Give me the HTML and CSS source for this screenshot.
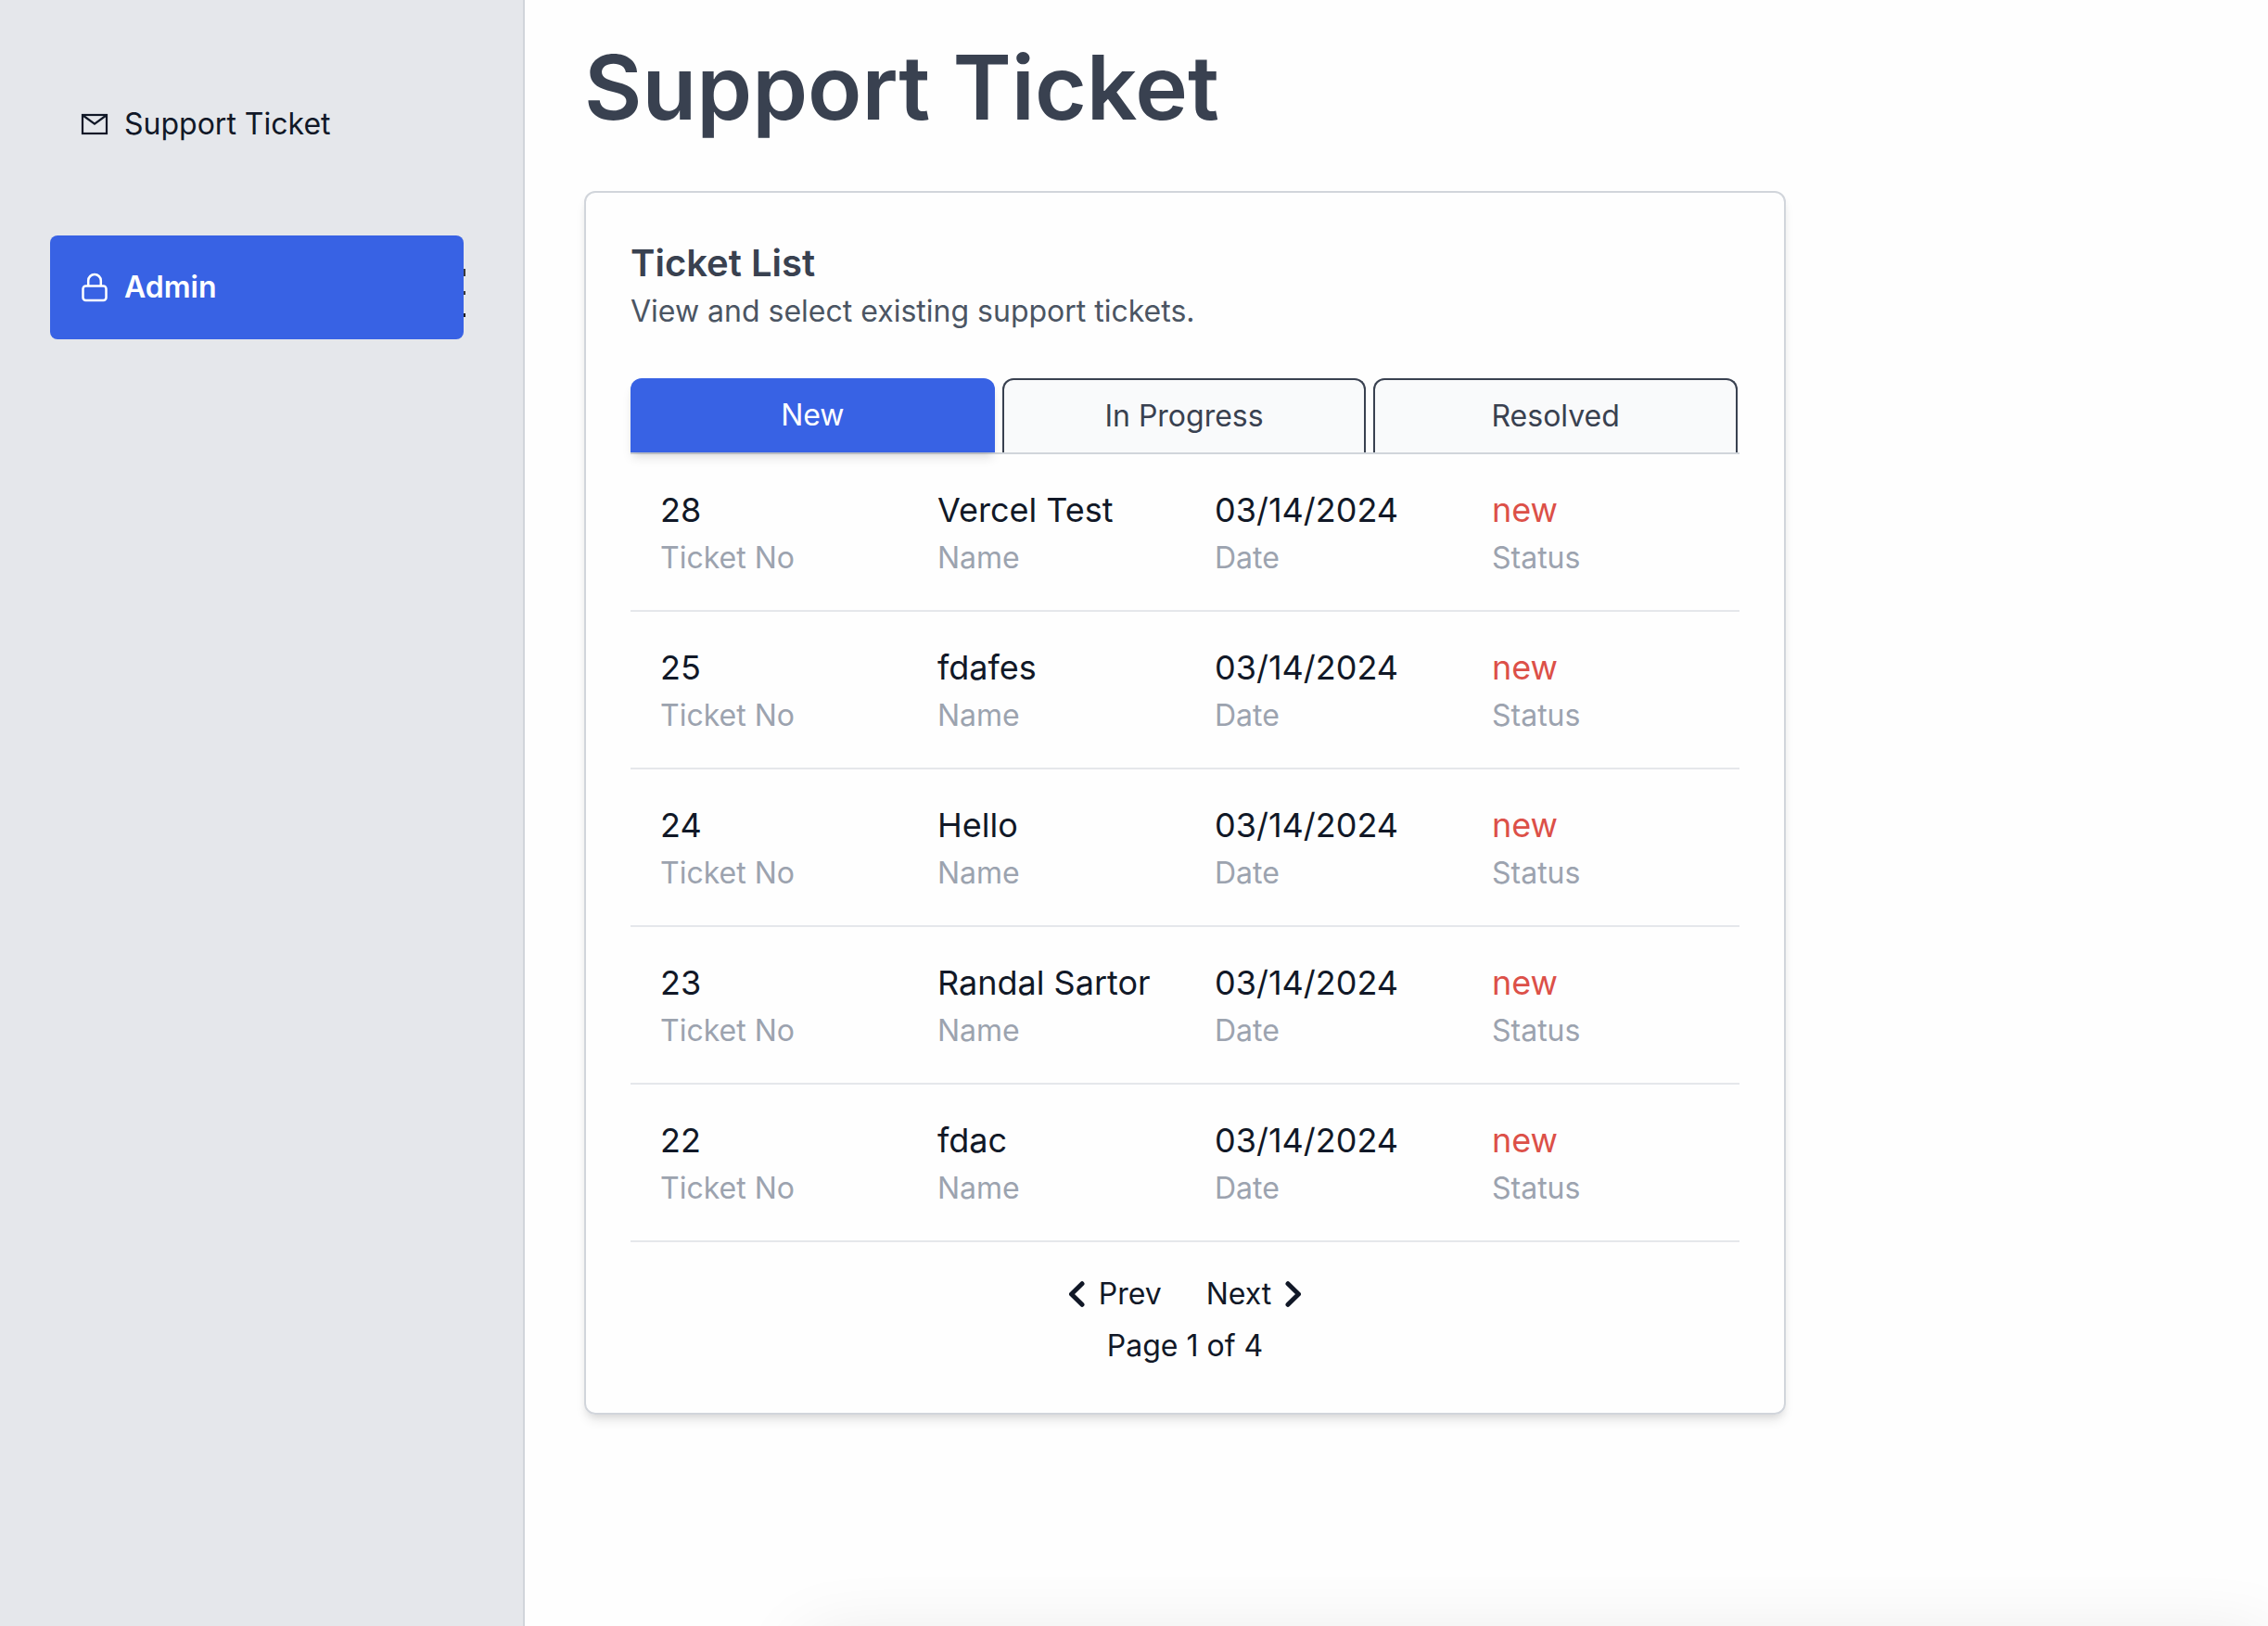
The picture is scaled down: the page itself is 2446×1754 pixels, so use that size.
FILE: index.html
```html
<!DOCTYPE html>
<html lang="en">
<head>
  <meta charset="utf-8">
  <meta name="viewport" content="width=device-width, initial-scale=1">
  <title>Support Ticket</title>
  <link rel="stylesheet" href="styles.css">
</head>
<body>
  <div class="layout">
    <nav class="sidebar" aria-label="Main">
      <a class="nav-link" href="#support">
        <svg class="nav-icon" viewBox="0 0 32 32" fill="none" stroke="currentColor" aria-hidden="true">
          <rect x="3" y="6" width="26" height="20" stroke-width="2.2"/>
          <path d="M3.5 6.500 16 15.700 28.500 6.500" stroke-width="2.200"/>
        </svg>
        <span>Support Ticket</span>
      </a>
      <a class="nav-link nav-link-active" href="#admin" aria-current="page">
        <svg class="nav-icon" viewBox="0 0 32 32" fill="none" stroke="currentColor" stroke-width="2.500" aria-hidden="true">
          <rect x="3.500" y="14.500" width="25" height="15.500" rx="3"/>
          <path d="M9.200 14.500V8.800a6.800 6.800 0 0 1 13.600 0v5.700"/>
        </svg>
        <span>Admin</span>
        <svg class="nav-ticks" viewBox="0 0 2 52" fill="#3a3a3a" aria-hidden="true">
          <path d="M0 0h2v8H0zM0 24h2v4H0z"/>
          <path d="M0 48h2v4H0z" fill="#1c1c1c"/>
        </svg>
      </a>
    </nav>

    <main class="content">
      <h1 class="page-title">Support Ticket</h1>

      <section class="card">
        <h2 class="card-title">Ticket List</h2>
        <p class="card-text">View and select existing support tickets.</p>

        <div class="tabs" role="tablist">
          <button class="tab tab-active" type="button" role="tab" aria-selected="true">New</button>
          <button class="tab" type="button" role="tab" aria-selected="false">In Progress</button>
          <button class="tab" type="button" role="tab" aria-selected="false">Resolved</button>
        </div>

        <table class="tickets">
          <tbody>
            <tr>
              <td>28<span class="label">Ticket No</span></td>
              <td>Vercel Test<span class="label">Name</span></td>
              <td>03/14/2024<span class="label">Date</span></td>
              <td><span class="status">new</span><span class="label">Status</span></td>
            </tr>
            <tr>
              <td>25<span class="label">Ticket No</span></td>
              <td>fdafes<span class="label">Name</span></td>
              <td>03/14/2024<span class="label">Date</span></td>
              <td><span class="status">new</span><span class="label">Status</span></td>
            </tr>
            <tr>
              <td>24<span class="label">Ticket No</span></td>
              <td>Hello<span class="label">Name</span></td>
              <td>03/14/2024<span class="label">Date</span></td>
              <td><span class="status">new</span><span class="label">Status</span></td>
            </tr>
            <tr>
              <td>23<span class="label">Ticket No</span></td>
              <td>Randal Sartor<span class="label">Name</span></td>
              <td>03/14/2024<span class="label">Date</span></td>
              <td><span class="status">new</span><span class="label">Status</span></td>
            </tr>
            <tr>
              <td>22<span class="label">Ticket No</span></td>
              <td>fdac<span class="label">Name</span></td>
              <td>03/14/2024<span class="label">Date</span></td>
              <td><span class="status">new</span><span class="label">Status</span></td>
            </tr>
          </tbody>
        </table>

        <div class="pager">
          <button class="pager-button" type="button">
            <svg class="chevron" viewBox="0 0 20 32" fill="none" stroke="currentColor" aria-hidden="true"><path d="M14 4.700 2.500 16 14 27.300"/></svg>
            Prev
          </button>
          <button class="pager-button" type="button">
            Next
            <svg class="chevron" viewBox="0 0 20 32" fill="none" stroke="currentColor" aria-hidden="true"><path d="M6 4.700 17.500 16 6 27.300"/></svg>
          </button>
        </div>
        <p class="page-count">Page 1 of 4</p>
      </section>
    </main>
  </div>
  <div class="bottom-sheet" aria-hidden="true"></div>
</body>
</html>
```
FILE: styles.css
```css
* {
  box-sizing: border-box;
}

body {
  margin: 0;
  background: #fefefe;
  color: #111827;
  font-family: Inter, "Liberation Sans", sans-serif;
  font-size: 32px;
  line-height: 48px;
}

h1,
h2,
p {
  margin: 0;
}

button {
  margin: 0;
  font: inherit;
  cursor: pointer;
}

.layout {
  display: flex;
  min-height: 100vh;
}

.sidebar {
  display: flex;
  flex: none;
  flex-direction: column;
  gap: 64px;
  width: 566px;
  padding: 78px 64px 64px 54px;
  border-right: 2px solid #d1d5db;
  background: #e5e7eb;
}

.nav-link {
  position: relative;
  display: flex;
  align-items: center;
  gap: 16px;
  padding: 32px;
  border-radius: 8px;
  color: inherit;
  text-decoration: none;
}

.nav-link-active {
  background: #3862e4;
  color: #ffffff;
  font-weight: 600;
}

.nav-icon {
  flex: none;
  width: 32px;
  height: 32px;
}

.nav-ticks {
  position: absolute;
  top: 36px;
  left: 100%;
  width: 2px;
  height: 52px;
}

.content {
  flex: 1;
  padding: 46px 64px 64px;
}

.page-title {
  margin-bottom: 64px;
  color: #394150;
  font-size: 96px;
  font-weight: 600;
  line-height: 96px;
}

.card {
  max-width: 1296px;
  padding: 48px;
  border: 2px solid #d1d5db;
  border-radius: 12px;
  box-shadow: 0 8px 12px -2px rgb(0 0 0 / 10%), 0 4px 8px -4px rgb(0 0 0 / 10%);
}

.card-title {
  color: #394150;
  font-size: 40px;
  font-weight: 600;
  line-height: 56px;
}

.card-text {
  color: #4b5563;
}

.tabs {
  display: grid;
  grid-template-columns: repeat(3, 1fr);
  gap: 8px;
  margin-top: 48px;
  padding-right: 2px;
  border-bottom: 2px solid #d1d5db;
}

.tab {
  height: 80px;
  padding: 0;
  border: 2px solid #394150;
  border-bottom: 0;
  border-radius: 12px 12px 0 0;
  background: #f9fafb;
  color: #394150;
}

.tab-active {
  border: 0;
  background: #3862e4;
  color: #ffffff;
  box-shadow: 0 8px 12px -2px rgb(0 0 0 / 10%), 0 4px 8px -4px rgb(0 0 0 / 10%);
}

.tickets {
  width: 100%;
  border-spacing: 0;
  table-layout: fixed;
}

.tickets td {
  padding: 32px 0 32px 32px;
  border-bottom: 2px solid #e5e7eb;
  font-size: 36px;
  line-height: 56px;
  vertical-align: top;
  white-space: nowrap;
}

.status {
  color: #dc5048;
}

.label {
  display: block;
  color: #9ca3af;
  font-size: 32px;
  line-height: 48px;
}

.pager {
  display: flex;
  justify-content: center;
  gap: 48px;
  margin: 32px 0 8px;
}

.pager-button {
  display: flex;
  align-items: center;
  gap: 12px;
  padding: 0;
  border: 0;
  background: none;
  color: inherit;
}

.chevron {
  width: 20px;
  height: 32px;
  stroke-width: 5;
  stroke-linecap: round;
  stroke-linejoin: round;
}

.page-count {
  text-align: center;
}

/* Sheet parked below the fold; only its shadow shows. */
.bottom-sheet {
  position: fixed;
  top: 100%;
  right: 0;
  left: 870px;
  height: 200px;
  box-shadow: 0 16px 80px rgb(0 0 0 / 10%);
}
```
